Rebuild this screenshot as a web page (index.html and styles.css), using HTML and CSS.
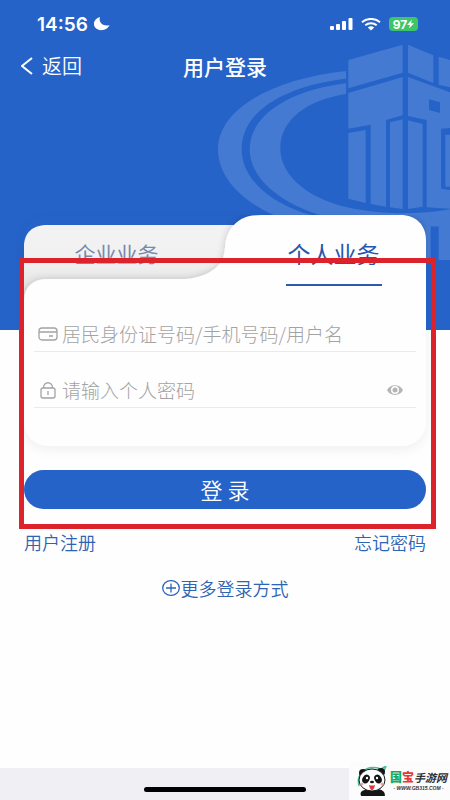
FILE: index.html
```html
<!DOCTYPE html>
<html lang="zh-CN">
<head>
<meta charset="utf-8">
<meta name="viewport" content="width=device-width, initial-scale=1">
<title>用户登录</title>
<link rel="stylesheet" href="styles.css">
</head>
<body>
<div class="screen">
  <div class="backdrop">
    <svg class="emblem" viewBox="0 0 720 870" aria-hidden="true">
      <path d="M408 93C180 118 24 210 24 328C24 420 110 500 240 545H400C230 525 95 440 95 328C95 220 210 140 408 116Z"/>
      <path d="M408 130C230 152 119 230 119 328C119 440 270 540 500 556L720 560V508C640 522 540 526 440 508C300 484 211 410 211 325C211 240 290 180 408 162Z"/>
      <path d="M415 60L578 14V98L415 145Z M594 14L670 46V129L594 98Z M686 50L720 60V142L686 134Z"/>
      <path d="M415 159L578 111V226L528 240V500L482 492V254L415 266Z"/>
      <path fill-rule="evenodd" d="M594 111L720 157V264L693 266V446L720 450V506L650 502V240L594 228Z M657 178V210L690 219V187Z"/>
      <path d="M415 279L467 270V489L415 476Z M540 247L578 238V507L540 502Z M594 241L638 252V500L594 507Z M706 284H720V440H706Z"/>
      <path d="M640 530H720V543H662V655H640Z M686 555H720V660H686Z"/>
    </svg>
  </div>

  <div class="status">
    <span class="time">14:56</span>
    <svg class="moon" viewBox="0 0 16 14" aria-hidden="true"><path d="M6 0C-1 2-2 9 3 12C8 15 14 12 15.500 8C10 10 4 6 6 0Z"/></svg>
    <span class="status-icons">
      <svg class="signal" viewBox="0 0 23 12" aria-hidden="true"><rect x="0" y="8" width="4" height="4" rx="1"/><rect x="6" y="6" width="4" height="6" rx="1"/><rect x="12" y="3" width="4" height="9" rx="1"/><rect x="18.500" y="0" width="4" height="12" rx="1"/></svg>
      <svg class="wifi" viewBox="0 0 20 13" aria-hidden="true"><path class="arc" d="M1 4.300C6-.2 14-.2 19 4.300M4.300 7.300C7.600 4.500 12.400 4.500 15.700 7.300"/><path d="M6.800 9.400C8.600 7.900 11.400 7.900 13.200 9.400L10 12.500Z"/></svg>
      <span class="battery">97<svg viewBox="0 0 8 10" aria-hidden="true"><path d="M5.500 0L0 6H3.300L2.300 10L8 4H4.600Z"/></svg></span>
    </span>
  </div>

  <header class="nav">
    <button class="back" type="button">
      <svg viewBox="0 0 12 18" aria-hidden="true"><path d="M11 1L1 9L11 17"/></svg>返回
    </button>
    <h1>用户登录</h1>
  </header>

  <main class="content">
    <form class="login">
      <div class="card">
        <div class="tabs">
          <svg class="tab-shape" viewBox="0 0 402 85" preserveAspectRatio="none" aria-hidden="true">
            <defs>
              <linearGradient id="fold" x1="0" y1="0" x2="0" y2="1">
                <stop offset="0" stop-color="#f3f3f3"/><stop offset=".5" stop-color="#f0f0f1"/><stop offset="1" stop-color="#e0e0e1"/>
              </linearGradient>
              <filter id="soft" x="-10%" y="-20%" width="120%" height="140%"><feDropShadow dx="-1" dy="-1" stdDeviation="3" flood-color="#000" flood-opacity=".14"/></filter>
            </defs>
            <path fill="url(#fold)" d="M0 85V32C0 17 9 10 24 10H230V72H24L0 85Z"/>
            <path class="front" filter="url(#soft)" d="M0 85C1 71 9 64 24 64H158C176 64 194 56 199 43C203 31 199 23 209 11C216 3 224 0 238 0H376C392 0 402 10 402 25V85Z"/>
          </svg>
          <button class="tab" type="button">企业业务</button>
          <button class="tab tab-active" type="button">个人业务</button>
        </div>
        <div class="fields">
          <div class="field">
            <label for="account" aria-label="账号"><svg viewBox="0 0 20 18" aria-hidden="true"><rect x="1" y="3" width="18" height="12" rx="3"/><path d="M1 7H19M11 11H15"/></svg></label>
            <input id="account" type="text" placeholder="居民身份证号码/手机号码/用户名">
          </div>
          <div class="field">
            <label for="password" aria-label="密码"><svg viewBox="0 0 20 18" aria-hidden="true"><rect x="3" y="7" width="14" height="10" rx="2"/><path d="M5.500 7C5.500 0 14.500 0 14.500 7M10 10V14"/></svg></label>
            <input id="password" type="password" placeholder="请输入个人密码">
            <button class="reveal" type="button" aria-label="显示密码"><svg viewBox="0 0 18 12" aria-hidden="true"><path fill-rule="evenodd" d="M1 6C4 -.5 14 -.5 17 6C14 12.500 4 12.500 1 6ZM9 2A4 4 0 1 0 9 10A4 4 0 1 0 9 2Z"/><circle cx="9" cy="6" r="2.500"/></svg></button>
          </div>
        </div>
      </div>
      <button class="submit" type="submit">登 录</button>
    </form>
    <div class="links"><a href="#register">用户注册</a><a href="#forgot">忘记密码</a></div>
    <a class="more" href="#more"><svg viewBox="0 0 18 18" aria-hidden="true"><ellipse cx="9" cy="9" rx="8.300" ry="7.300"/><path d="M4 9H14M9 4.500V13.500"/></svg>更多登录方式</a>
  </main>

  <footer class="home"><span class="home-bar"></span></footer>

  <div class="highlight"></div>
  <div class="watermark">
    <svg class="panda" viewBox="0 0 32 30" aria-hidden="true">
      <path class="leaf" d="M5 6Q12-1 24 3L29 0L27 5M2 20Q0 12 4 8"/>
      <circle cx="6" cy="7" r="4"/><circle cx="24" cy="6" r="4"/>
      <path d="M5 30Q5 22 15 22Q27 22 28 30Z"/>
      <ellipse class="face" cx="15" cy="14" rx="13" ry="11"/>
      <ellipse cx="9" cy="13" rx="3.500" ry="4.500" transform="rotate(30 9 13)"/><ellipse cx="21" cy="13" rx="3.500" ry="4.500" transform="rotate(-30 21 13)"/>
      <circle class="eye" cx="10" cy="12" r="1.200"/><circle class="eye" cx="20" cy="12" r="1.200"/>
      <ellipse cx="15" cy="16" rx="2" ry="1.200"/><path class="mouth" d="M12 19Q15 20 18 19Q17 24 15 24Q13 24 12 19Z"/>
      <circle class="blush" cx="5" cy="18" r="1.500"/><circle class="blush" cx="25" cy="18" r="1.500"/>
      <path d="M4 30Q2 25 8 24L13 29ZM18 29L23 24Q29 25 27 30Z"/>
    </svg>
    <div class="brand">
      <div class="brand-name"><b class="green">国</b><b class="red">宝</b><span>手游网</span></div>
      <div class="brand-url">- WWW.GB315.COM -</div>
    </div>
  </div>
</div>
</body>
</html>
```
FILE: styles.css
```css
:root {
  --blue: #2563c8;
  --link: #2f64b4;
  --gray: #a3a3a3;
}

* { box-sizing: border-box; }

body {
  margin: 0;
  background: #fefefe;
  font-family: "Noto Sans CJK SC", sans-serif;
}

button, input { font: inherit; color: inherit; border: 0; padding: 0; background: none; }
a { color: var(--link); text-decoration: none; }
svg { display: block; flex: none; }

.screen {
  position: relative;
  display: flex;
  flex-direction: column;
  min-height: 100vh;
  overflow: hidden;
}

.backdrop {
  position: absolute;
  inset: 0 0 auto;
  height: 330px;
  background: var(--blue);
  overflow: hidden;
}
.emblem {
  position: absolute;
  top: 40px;
  right: 0;
  width: 240px;
  height: 290px;
  fill: #447ad1;
}

.status {
  position: relative;
  display: flex;
  align-items: center;
  height: 48px;
  padding: 0 32px 0 37px;
  color: #fff;
  fill: #fff;
  font-family: Inter, sans-serif;
}
.time { font-size: 19px; font-weight: 600; }
.moon { width: 16px; height: 14px; margin-left: 6px; }
.status-icons { display: flex; align-items: center; gap: 8px; margin-left: auto; }
.signal { width: 23px; height: 12px; }
.wifi { width: 20px; height: 13px; }
.arc { fill: none; stroke: #fff; stroke-width: 2; }
.battery {
  display: flex;
  align-items: center;
  justify-content: center;
  width: 29px;
  height: 14px;
  border-radius: 4px;
  background: #3dc567;
  font-size: 12px;
  font-weight: 700;
}
.battery svg { width: 7px; height: 10px; }

.nav {
  position: relative;
  display: grid;
  grid-template-columns: 1fr auto 1fr;
  align-items: center;
  height: 36px;
  padding: 0 21px;
  color: #fff;
}
.nav h1 { margin: 0; font-size: 21px; font-weight: 500; line-height: 36px; }
.back { display: flex; align-items: center; gap: 9px; font-size: 20px; font-weight: 350; line-height: 36px; }
.back svg { width: 12px; height: 18px; fill: none; stroke: #fff; stroke-width: 2; }

.content {
  position: relative;
  display: flex;
  flex-direction: column;
  padding: 131px 24px 24px;
}

.card {
  border-radius: 24px;
  box-shadow: 0 4px 12px rgba(0, 0, 0, .06);
}
.tabs {
  position: relative;
  display: grid;
  grid-template-columns: 46% 46%;
  justify-content: space-between;
  height: 85px;
}
.tab-shape { position: absolute; width: 100%; height: 100%; overflow: hidden; }
.front { fill: #fefefe; }
.tab {
  position: relative;
  align-self: start;
  justify-self: center;
  height: 55px;
  margin-top: 16px;
  padding: 0 2px 11px;
  color: #7789ab;
  font-size: 21px;
  line-height: 44px;
}
.tab-active {
  border-bottom: 2px solid #2b5ab0;
  color: #2457b0;
  font-size: 23px;
}

.fields {
  padding: 0 10px 38px;
  background: #fefefe;
  border-radius: 0 0 24px 24px;
}
.field {
  display: flex;
  align-items: center;
  gap: 4px;
  height: 56px;
  padding: 20px 12px 0 4px;
  border-bottom: 1px solid #eaeaea;
  color: var(--gray);
}
.field:first-child { height: 52px; padding-top: 16px; }
.field label svg { width: 20px; height: 18px; fill: none; stroke: var(--gray); stroke-width: 1.3; }
.field input { flex: 1; min-width: 0; height: 28px; outline: 0; font-size: 19px; font-weight: 300; }
.field input::placeholder { color: var(--gray); opacity: 1; }
.reveal svg { width: 18px; height: 12px; fill: #b5b5b5; }

.submit {
  display: block;
  width: 100%;
  height: 39px;
  margin-top: 24px;
  border-radius: 20px;
  background: var(--blue);
  color: #fff;
  font-size: 22px;
  font-weight: 350;
  line-height: 39px;
}
.links {
  display: flex;
  justify-content: space-between;
  margin-top: 19px;
  font-size: 18px;
  font-weight: 350;
  line-height: 28px;
}
.more {
  display: flex;
  align-items: center;
  align-self: center;
  gap: 1px;
  margin-top: 18px;
  font-size: 18px;
  font-weight: 350;
  line-height: 28px;
}
.more svg { width: 18px; height: 18px; fill: none; stroke: var(--link); stroke-width: 1.3; }

.home {
  display: flex;
  justify-content: center;
  height: 32px;
  margin-top: auto;
  padding-top: 19px;
  background: #f0eff4;
}
.home-bar { width: 36%; height: 5px; border-radius: 3px; background: #000; }

.highlight {
  position: absolute;
  top: 258px;
  left: 19px;
  right: 14px;
  height: 271px;
  border: 5px solid #dc232b;
  pointer-events: none;
}

.watermark {
  position: absolute;
  right: 0;
  bottom: 0;
  display: flex;
  align-items: center;
  gap: 1px;
  width: 101px;
  height: 38px;
  padding-left: 8px;
  background: #fcfcfd;
}
.panda { width: 32px; height: 30px; fill: #151515; }
.leaf { fill: none; stroke: #4ebd8f; stroke-width: 1.5; }
.face { fill: #fff; stroke: #151515; }
.eye { fill: #fff; }
.mouth { fill: #e3343d; }
.blush { fill: #f3a0a0; }
.brand-name { display: flex; align-items: center; font-size: 11px; font-weight: 700; font-style: italic; line-height: 14px; color: #2b3038; }
.brand-name b { font-size: 12px; font-style: normal; }
.green { color: #18a75b; }
.red { color: #e43a35; }
.brand-url { font: italic 700 5px/8px "Liberation Sans", sans-serif; color: #333; text-align: center; }
```
